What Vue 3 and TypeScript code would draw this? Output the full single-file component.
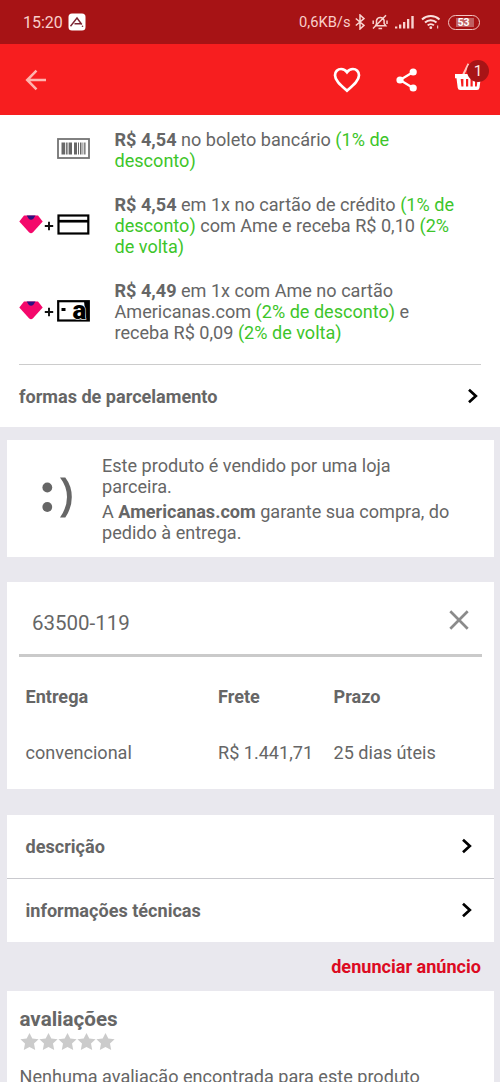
<script setup lang="ts">
interface Part { text: string; tone?: 'strong' | 'offer' }
interface Payment { icon: 'boleto' | 'card' | 'brand'; lines: Part[][] }

const payments: Payment[] = [
  {
    icon: 'boleto',
    lines: [
      [{ text: 'R$ 4,54', tone: 'strong' }, { text: ' no boleto bancário ' }, { text: '(1% de', tone: 'offer' }],
      [{ text: 'desconto)', tone: 'offer' }],
    ],
  },
  {
    icon: 'card',
    lines: [
      [{ text: 'R$ 4,54', tone: 'strong' }, { text: ' em 1x no cartão de crédito ' }, { text: '(1% de', tone: 'offer' }],
      [{ text: 'desconto)', tone: 'offer' }, { text: ' com Ame e receba R$ 0,10 ' }, { text: '(2%', tone: 'offer' }],
      [{ text: 'de volta)', tone: 'offer' }],
    ],
  },
  {
    icon: 'brand',
    lines: [
      [{ text: 'R$ 4,49', tone: 'strong' }, { text: ' em 1x com Ame no cartão' }],
      [{ text: 'Americanas.com ' }, { text: '(2% de desconto)', tone: 'offer' }, { text: ' e' }],
      [{ text: 'receba R$ 0,09 ' }, { text: '(2% de volta)', tone: 'offer' }],
    ],
  },
]

const sections: string[] = ['descrição', 'informações técnicas']
</script>

<template>
  <div class="screen">
    <div class="status">
      <span class="clock">15:20</span>
      <svg class="app-mark" width="18" height="18" viewBox="0 0 18 18">
        <rect x="0.5" y="0.5" width="17" height="17" rx="3.500" fill="#fff" />
        <path d="M2.500 13.200 9 5l4.800 6.500M6.500 10.800h6.300" fill="none" stroke="#7c2634" stroke-width="1.400" />
        <circle cx="14.500" cy="13.200" r="0.800" fill="#7c2634" />
      </svg>
      <span class="speed">0,6KB/s</span>
      <svg class="bt" width="10" height="16" viewBox="0 0 10 16" fill="none" stroke="#f8d4d0" stroke-width="1.500">
        <path d="M.8 4.500 9 11.400 5 15V1l4 3.600L.8 11.500" />
      </svg>
      <svg class="bell" width="16" height="16" viewBox="0 0 16 16" fill="none" stroke="#f8d4d0" stroke-width="1.500">
        <path d="M3.500 11.800h10.300l-1.700-2.300V6.500a3.900 3.900 0 0 0-7.600 0v3.200zM6.500 14.400h3.600M1 14.500 14 1.200M1.200 6.500v3.500M15 6.500v3.500" />
      </svg>
      <svg class="signal" width="20" height="14" viewBox="0 0 20 14" fill="#f8d4d0">
        <path d="M0 11.500h2.300v2H0zM4 9.500h2.300v4H4zM8 7h2.300v6.500H8zM12 4h2.300v9.500H12zM16.300 1h2.400v12.500h-2.400z" />
      </svg>
      <svg class="wifi" width="20" height="16" viewBox="0 0 20 16" fill="none" stroke="#fbe0dd" stroke-width="2">
        <path d="M1 5.500a13 13 0 0 1 17.500 0M4 8.500a8.500 8.500 0 0 1 11.500 0M6.700 11.400a4.500 4.500 0 0 1 6.200 0" />
        <circle cx="9.800" cy="13.700" r="1.400" fill="#fbe0dd" stroke="none" />
        <path d="M16.700 11.500v3" stroke-width="1" />
      </svg>
      <span class="battery">53</span>
    </div>

    <div class="toolbar">
      <svg class="back" width="22" height="22" viewBox="0 0 22 22" fill="none" stroke="#ffb5ae" stroke-width="2.500">
        <path d="M21 11H2.500M11.500 1.700 2.200 11l9.300 9.300" />
      </svg>
      <svg class="heart" width="28" height="26" viewBox="0 0 28 26" fill="none" stroke="#fff" stroke-width="2.700">
        <path d="M14 23.700C7.500 18 2 13.500 2 8.300 2 4.700 4.700 2 8.100 2c2.300 0 4.500 1.200 5.900 3.200C15.400 3.200 17.600 2 19.900 2 23.300 2 26 4.700 26 8.300c0 5.200-5.500 9.700-12 15.400z" />
      </svg>
      <svg class="share" width="22" height="24" viewBox="0 0 22 24">
        <path d="M17.200 4 4 12l13.200 8" fill="none" stroke="#fff" stroke-width="2.300" />
        <g fill="#fff"><circle cx="17.200" cy="4" r="3.600" /><circle cx="4" cy="12" r="3.600" /><circle cx="17.200" cy="20" r="3.600" /></g>
      </svg>
      <div class="basket">
        <svg width="28" height="28" viewBox="0 0 28 28">
          <path d="M8 12 13.500.8" stroke="#ffc4bd" stroke-width="2" />
          <path fill="#fff" fill-rule="evenodd" d="M0 11h27v4.200h-1.300l-1.200 9.600q-.3 2.200-2.500 2.200H5.200Q3 27 2.700 24.800L1.500 15.200H0zM5.700 16l.7 7.500h2V16zM11 16v7.500h2.200V16zM15.500 16v7.500h2.200V16zM20 16v7.500h1.800l.8-7.500z" />
        </svg>
        <span class="count">1</span>
      </div>
    </div>

    <section class="payments">
      <div v-for="p in payments" :key="p.icon" class="payment">
        <div class="payment-icon">
          <template v-if="p.icon !== 'boleto'">
            <svg class="gem" width="24" height="19" viewBox="0 0 24 19">
              <path d="M5 .5h14l4.700 5.900L14 17.300q-2 2-4 0L.3 6.400z" fill="#f4086b" />
              <path d="M7.700.5h8.800l-2.300 3.500q-2.200 1.500-4.300 0z" fill="#2b137f" />
            </svg>
            <svg class="plus" width="10" height="10" viewBox="0 0 10 10" stroke="#111" stroke-width="1.900"><path d="M.8 5h8.400M5 .8v8.400" /></svg>
          </template>
          <svg v-if="p.icon === 'boleto'" class="method" width="33" height="21" viewBox="0 0 33 21">
            <rect x="1" y="1" width="31" height="19" fill="#fff" stroke="#747474" stroke-width="1.800" />
            <path fill="#686868" d="M4.500 4.500h3.700v12H4.500zM9.100 4.500h1.500v12H9.100zM11.600 4.500h3.400v12h-3.400zM17 4.500h3v12h-3zM21 4.500h1v12h-1zM23 4.500h1.500v12H23zM25.500 4.500h.8v12h-.8zM27.200 4.500h1.300v12h-1.300z" />
          </svg>
          <svg v-else-if="p.icon === 'card'" class="method" width="33" height="21" viewBox="0 0 33 21">
            <rect x="1.500" y="1.500" width="29.800" height="18" fill="#fff" stroke="#000" stroke-width="2.200" />
            <path d="M1 7.200h31" stroke="#000" stroke-width="2.700" />
          </svg>
          <svg v-else class="method" width="33" height="22" viewBox="0 0 33 22">
            <rect x="1.200" y="1.200" width="30.600" height="19.300" fill="#fff" stroke="#000" stroke-width="2.200" />
            <path d="M27 1h5v20h-3z" fill="#000" />
            <rect x="4.500" y="8" width="4" height="3" fill="#000" />
            <text x="15.500" y="18.500" class="brand-a">a</text>
          </svg>
        </div>
        <div class="payment-text">
          <div v-for="(line, i) in p.lines" :key="i" class="line"><span v-for="(part, j) in line" :key="j" :class="part.tone">{{ part.text }}</span></div>
        </div>
      </div>
      <div class="installments">
        <span>formas de parcelamento</span>
        <svg class="chevron" width="12" height="16" viewBox="0 0 12 16"><path d="m2 1.800 6.800 6.200L2 14.200" /></svg>
      </div>
    </section>

    <section class="card seller">
      <svg class="smile" width="32" height="42" viewBox="0 0 32 42" fill="#666">
        <circle cx="6.300" cy="11.500" r="4.900" /><circle cx="6.300" cy="31" r="4.900" />
        <path d="M19 1.500h5.300Q30.800 10 30.800 21T24.300 41.500H19Q26 31.500 26 21T19 1.500z" />
      </svg>
      <div>
        <p>Este produto é vendido por uma loja<br>parceira.</p>
        <p class="guarantee">A <b>Americanas.com</b> garante sua compra, do<br>pedido à entrega.</p>
      </div>
    </section>

    <section class="card freight">
      <div class="zip">
        <span>63500-119</span>
        <svg width="20" height="20" viewBox="0 0 20 20" stroke="#8b8b8b" stroke-width="2.700"><path d="m1.300 1.300 17.400 17.400m0-17.400L1.300 18.700" /></svg>
      </div>
      <div class="grid">
        <b>Entrega</b><b>Frete</b><b>Prazo</b>
        <span>convencional</span><span>R$ 1.441,71</span><span>25 dias úteis</span>
      </div>
    </section>

    <section class="card sections">
      <div v-for="s in sections" :key="s" class="section-row">
        <span>{{ s }}</span>
        <svg class="chevron" width="12" height="16" viewBox="0 0 12 16"><path d="m2 1.800 6.800 6.200L2 14.200" /></svg>
      </div>
    </section>

    <div class="report">denunciar anúncio</div>

    <section class="card reviews">
      <h2>avaliações</h2>
      <div class="stars">
        <svg v-for="n in 5" :key="n" width="19" height="17" viewBox="0 0 19 17"><path fill="#cbcbcb" d="m9.500 0 2.800 5.500 6.300.8-4.600 4.200 1.200 6.400-5.700-3-5.700 3L5 10.500.4 6.300l6.300-.8z" /></svg>
      </div>
      <p>Nenhuma avaliação encontrada para este produto</p>
    </section>
  </div>
</template>

<style>
body { margin: 0; overflow: hidden; }
</style>

<style scoped>
* { box-sizing: border-box; }
.screen {
  width: 500px;
  height: 1082px;
  overflow: hidden;
  background: #e9e8ee;
  color: #666;
  font: 18.080px/21.350px Roboto, "Liberation Sans", sans-serif;
}
p, h2 { margin: 0; }
svg { display: block; flex: none; }
.status {
  height: 44px;
  display: flex;
  align-items: center;
  padding: 0 20.500px 0 23px;
  background: #a71315;
  color: #f9cfca;
  font-size: 16px;
}
.clock { width: 45px; padding-top: 2px; }
.speed { margin-left: auto; padding-top: 2px; font-size: 14.700px; }
.bt { margin-left: 4px; }
.bell { margin-left: 7px; }
.signal { margin-left: 7px; }
.wifi { margin-left: 6px; }
.battery {
  width: 32px;
  height: 15px;
  margin-left: 7px;
  border: 1.500px solid #f2c5c2;
  border-radius: 8px;
  background: linear-gradient(#bf6062, #bf6062) 7px 50% / 18px 9px no-repeat;
  color: #fff;
  font-size: 10.500px;
  font-weight: 700;
  line-height: 13px;
  text-align: center;
}
.toolbar {
  height: 71px;
  display: flex;
  align-items: center;
  padding: 0 11px 0 25px;
  background: #f71e1f;
}
.heart { margin-left: auto; }
.share { margin: 0 37px 0 35.500px; }
.basket { position: relative; width: 34px; height: 28px; margin-top: -5px; }
.count {
  position: absolute;
  left: 12px;
  top: -3px;
  width: 22px;
  height: 22px;
  border-radius: 50%;
  background: #a81416;
  color: #ffe6e2;
  font-size: 15.500px;
  line-height: 22px;
  text-align: center;
}
.payments { height: 312px; background: #fff; padding: 14px 19px 0; }
.payment { display: flex; align-items: center; margin-bottom: 22px; }
.payment-icon { display: flex; width: 71px; height: 40px; margin-right: 24.500px; align-items: center; }
.payment + .payment .payment-icon { margin-top: -2px; }
.payment:first-child .payment-icon { margin-top: -3px; }
.gem { margin-bottom: 1px; }
.plus { margin: 2px 0 0 1px; }
.method { margin-left: auto; }
.brand-a { font: 900 26px Roboto, sans-serif; fill: #000; stroke: #fff; stroke-width: 1px; paint-order: stroke; }
.line { white-space: pre; }
.strong, b { font-weight: 700; }
.offer { color: #3dc52a; }
.installments {
  display: flex;
  align-items: center;
  justify-content: space-between;
  height: 64px;
  margin-top: -2px;
  border-top: 1px solid #ccc;
  font-weight: 700;
}
.installments span { padding-top: 1px; }
.chevron { fill: none; stroke: #000; stroke-width: 2.700px; margin-right: 2px; }
.card { margin: 0 6.500px; background: #fff; }
.seller { display: flex; height: 117px; margin-top: 12.500px; padding: 15.500px 0 0 34px; }
.smile { margin: 21px 29.500px 0 0; }
.guarantee { margin-top: 3px; }
.freight { height: 206.500px; margin-top: 25.500px; padding: 0 12px 0 12.500px; }
.zip {
  display: flex;
  align-items: center;
  justify-content: space-between;
  height: 74.500px;
  padding: 12px 12.500px 0 13px;
  border-bottom: 3px solid #cacaca;
  font-size: 20.500px;
}
.zip svg { margin-bottom: 7px; }
.grid {
  display: grid;
  grid-template-columns: 192.500px 115.500px 1fr;
  row-gap: 35px;
  padding: 29.500px 0 0 6.500px;
}
.sections { margin-top: 26px; }
.section-row {
  display: flex;
  align-items: center;
  justify-content: space-between;
  height: 63.500px;
  padding: 0 19px;
  font-weight: 700;
}
.section-row span { padding-top: 1px; }
.section-row + .section-row { border-top: 1px solid #c9c9ce; }
.report {
  height: 49.500px;
  padding: 14.500px 19px 0 0;
  color: #dc0a22;
  font-weight: 700;
  text-align: right;
}
.reviews { height: 120px; padding: 15.500px 13px 0; }
h2 { font-size: 20.600px; line-height: 25px; }
.stars { display: flex; margin: 1px 0 16px 0.500px; }
</style>
